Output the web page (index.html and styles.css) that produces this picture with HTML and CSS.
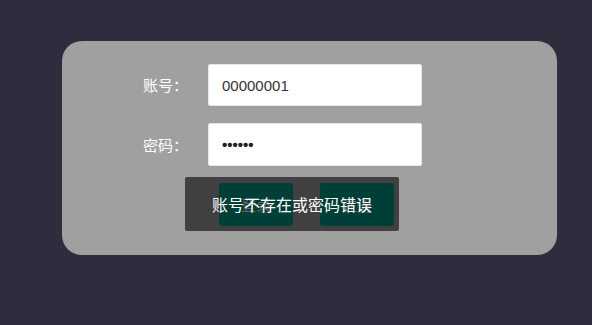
FILE: index.html
```html
<!DOCTYPE html>
<html>
<head>
<meta charset="utf-8">
<link rel="stylesheet" href="styles.css">
</head>
<body>
<div class="card">
  <div class="row">
    <label class="label">账号：</label>
    <div class="input">00000001</div>
  </div>
  <div class="row">
    <label class="label">密码：</label>
    <div class="input pw">••••••</div>
  </div>
  <div class="buttons">
    <div class="btn">登录</div>
    <div class="btn">注册</div>
  </div>
  <div class="toast">账号不存在或密码错误</div>
</div>
</body>
</html>
```
FILE: styles.css
```css
html, body { margin: 0; padding: 0; }
body {
  background: #2f2d3d;
  width: 592px;
  height: 325px;
  padding-top: 41px;
  box-sizing: border-box;
  font-family: "Liberation Sans", "Noto Sans CJK SC", sans-serif;
}
.card {
  position: relative;
  margin-left: 62px;
  width: 495px;
  height: 214px;
  box-sizing: border-box;
  background: #a0a0a0;
  border-radius: 20px;
  padding: 23px 0 0 81px;
  display: flex;
  flex-direction: column;
  gap: 17px;
}
.row {
  display: flex;
  align-items: center;
}
.label {
  width: 65px;
  color: #fff;
  font-size: 15px;
  font-family: "Noto Sans CJK SC", sans-serif;
  line-height: 20px;
}
.input {
  width: 214px;
  height: 42px;
  box-sizing: border-box;
  background: #fff;
  border: 1px solid #e6e6e6;
  border-radius: 2px;
  padding-left: 13px;
  display: flex;
  align-items: center;
  color: #333;
  font-size: 15px;
}
.row:nth-child(2) .input { height: 43px; }
.pw { font-size: 15px; font-weight: bold; color: #222; }
.buttons {
  display: flex;
  gap: 27px;
  padding-left: 76px;
}
.btn {
  width: 74px;
  height: 43px;
  background: #009d89;
  border-radius: 3px;
  color: #fff;
  font-size: 15px;
  font-family: "Noto Sans CJK SC", sans-serif;
  display: flex;
  align-items: center;
  justify-content: center;
}
.toast {
  position: absolute;
  left: 123px;
  top: 136px;
  width: 214px;
  height: 54px;
  background: rgba(0, 0, 0, 0.6);
  border-radius: 2px;
  color: #fff;
  font-size: 16px;
  font-family: "Noto Sans CJK SC", sans-serif;
  display: flex;
  align-items: center;
  justify-content: center;
}
```
